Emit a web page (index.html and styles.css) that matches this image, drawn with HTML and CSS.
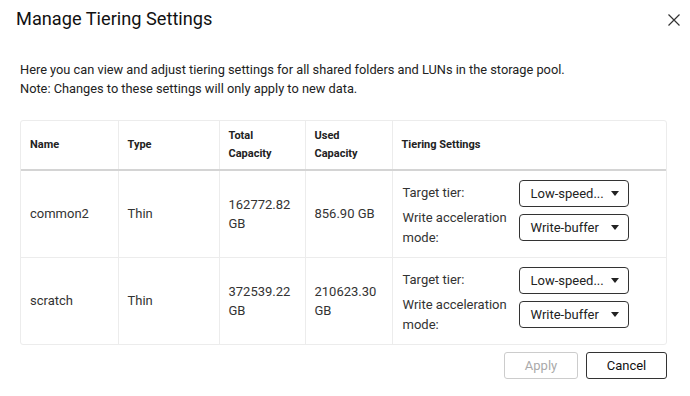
FILE: index.html
```html
<!DOCTYPE html>
<html lang="en">
<head>
  <meta charset="UTF-8">
  <title>Manage Tiering Settings</title>
  <link rel="stylesheet" href="styles.css">
</head>
<body>
  <div class="dialog">
    <header class="dialog-header">
      <h1>Manage Tiering Settings</h1>
      <button class="close-btn" aria-label="Close">
        <svg width="12" height="12" viewBox="0 0 12 12">
          <path d="M0.5 0.5 L11.5 11.5 M11.5 0.5 L0.5 11.5" stroke="#333" stroke-width="1.2" fill="none"/>
        </svg>
      </button>
    </header>

    <div class="dialog-body">
      <p class="intro">
        Here you can view and adjust tiering settings for all shared folders and LUNs in the storage pool.<br>
        Note: Changes to these settings will only apply to new data.
      </p>

      <div class="table-wrap">
        <table class="tier-table">
          <colgroup>
            <col class="col-name">
            <col class="col-type">
            <col class="col-total">
            <col class="col-used">
            <col>
          </colgroup>
          <thead>
            <tr>
              <th>Name</th>
              <th>Type</th>
              <th>Total<br>Capacity</th>
              <th>Used<br>Capacity</th>
              <th>Tiering Settings</th>
            </tr>
          </thead>
          <tbody>
            <tr>
              <td>common2</td>
              <td>Thin</td>
              <td>162772.82<br>GB</td>
              <td>856.90 GB</td>
              <td>
                <div class="settings">
                  <span class="label">Target tier:</span>
                  <div class="select"><span>Low-speed...</span><i class="caret"></i></div>
                  <span class="label">Write acceleration mode:</span>
                  <div class="select"><span>Write-buffer</span><i class="caret"></i></div>
                </div>
              </td>
            </tr>
            <tr>
              <td>scratch</td>
              <td>Thin</td>
              <td>372539.22<br>GB</td>
              <td>210623.30<br>GB</td>
              <td>
                <div class="settings">
                  <span class="label">Target tier:</span>
                  <div class="select"><span>Low-speed...</span><i class="caret"></i></div>
                  <span class="label">Write acceleration mode:</span>
                  <div class="select"><span>Write-buffer</span><i class="caret"></i></div>
                </div>
              </td>
            </tr>
          </tbody>
        </table>
      </div>

      <div class="actions">
        <button class="btn btn-disabled" disabled>Apply</button>
        <button class="btn">Cancel</button>
      </div>
    </div>
  </div>
</body>
</html>
```

FILE: styles.css
```css
html, body {
  margin: 0;
  padding: 0;
}

body {
  font-family: Roboto, "Liberation Sans", Arial, sans-serif;
  background-color: #fff;
  color: #333;
}

.dialog {
  width: 690px;
  height: 396px;
  box-sizing: border-box;
}

.dialog-header {
  display: flex;
  justify-content: space-between;
  align-items: center;
  padding: 3px 10px 0 16px;
  height: 30px;
}

.dialog-header h1 {
  margin: 0;
  font-size: 18.2px;
  font-weight: 400;
  color: #111;
}

.close-btn {
  background: none;
  border: none;
  padding: 0;
  width: 12px;
  height: 12px;
  margin-top: 3px;
  cursor: pointer;
  display: flex;
}

.dialog-body {
  padding: 0 23px 0 20px;
}

.intro {
  margin: 27px 0 22px;
  font-size: 12.8px;
  line-height: 19px;
  color: #222;
}

.table-wrap {
  border: 1px solid #ececec;
  border-radius: 3px;
}

.tier-table {
  width: 100%;
  border-collapse: collapse;
  table-layout: fixed;
}

.col-name { width: 97px; }
.col-type { width: 101px; }
.col-total { width: 86px; }
.col-used { width: 87px; }

.tier-table th,
.tier-table td {
  text-align: left;
  padding: 0 9px;
  border-left: 1px solid #ececec;
}

.tier-table th:first-child,
.tier-table td:first-child {
  border-left: none;
}

.tier-table th {
  height: 48px;
  font-size: 11px;
  font-weight: 700;
  line-height: 18px;
  color: #222;
  border-bottom: 2px solid #d4d4d4;
}

.tier-table td {
  font-size: 13px;
  line-height: 19px;
  color: #333;
}

.tier-table tbody tr {
  height: 87px;
}

.tier-table tbody tr + tr td {
  border-top: 1px solid #ececec;
}

.settings {
  display: grid;
  grid-template-columns: 116px 110px;
  row-gap: 1px;
  align-items: center;
  padding-left: 1px;
}

.label {
  line-height: 20px;
  padding-right: 10px;
}

.select {
  height: 27px;
  box-sizing: border-box;
  border: 1px solid #333;
  border-radius: 4px;
  display: flex;
  align-items: center;
  justify-content: space-between;
  padding: 0 9px 0 11px;
  font-size: 13px;
  color: #222;
}

.caret {
  width: 0;
  height: 0;
  border-left: 4px solid transparent;
  border-right: 4px solid transparent;
  border-top: 5px solid #222;
}

.actions {
  display: flex;
  justify-content: flex-end;
  gap: 8px;
  margin-top: 7px;
}

.btn {
  height: 27px;
  min-width: 74px;
  padding: 0 12px;
  font-family: inherit;
  font-size: 13px;
  background: #fff;
  color: #111;
  border: 1px solid #333;
  border-radius: 3px;
  cursor: pointer;
}

.btn + .btn {
  min-width: 81px;
}

.btn-disabled {
  color: #aaa;
  border-color: #ccc;
  cursor: default;
}
```
